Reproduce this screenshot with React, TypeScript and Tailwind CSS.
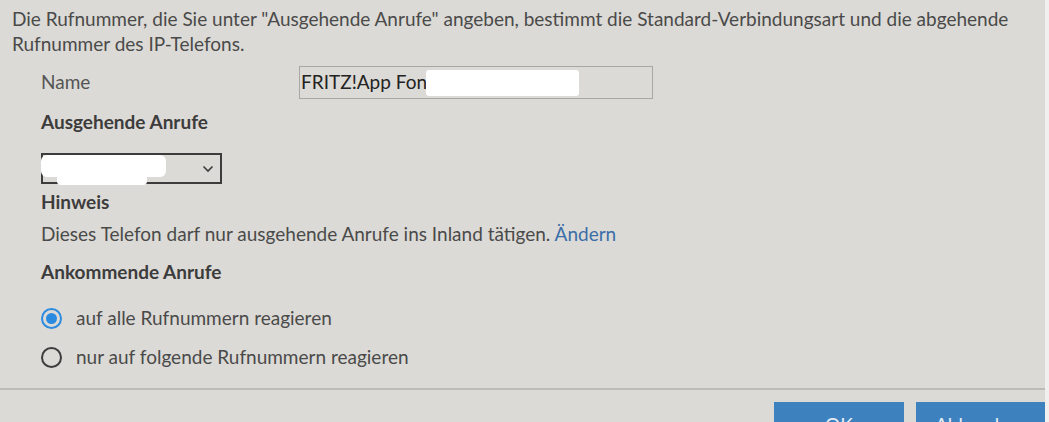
import React from "react";

export default function App() {
  const font = { fontFamily: "Lato, 'Open Sans', sans-serif" };
  return (
    <div className="flex h-[422px] w-[1049px] overflow-hidden bg-[#f1f0ee]" style={font}>
      <div className="flex w-[1045px] shrink-0 flex-col bg-[#dcdad6] text-[19px] text-[#4a4a4a] [&>*]:shrink-0">
        <p className="mt-[6px] pl-[12px] pr-[20px] leading-[25px]">
          Die Rufnummer, die Sie unter "Ausgehende Anrufe" angeben, bestimmt die Standard-Verbindungsart und die abgehende Rufnummer des IP-Telefons.
        </p>

        <div className="mt-[10px] flex h-[33px] items-center pl-[41px]">
          <span className="w-[258px] text-[#555]">Name</span>
          <div className="relative flex h-[33px] w-[354px] items-center border border-[#a9a7a3] pl-[1px] text-[#222]">
            FRITZ!App Fon
            <div className="absolute left-[126px] top-[3px] h-[26px] w-[153px] rounded-[3px] bg-white" />
          </div>
        </div>

        <div className="mt-[11px] pl-[41px] font-bold leading-[24px] text-[#3c3c3c]">Ausgehende Anrufe</div>

        <div className="relative ml-[41px] mt-[19px] flex h-[31px] w-[181px] items-center justify-end border-2 border-[#3c3c3c] pr-[6px]">
          <svg width="12" height="8" viewBox="0 0 12 8" fill="none" stroke="#3c3c3c" strokeWidth="1.6">
            <path d="M1.5 1.5 L6 6 L10.5 1.5" />
          </svg>
          <div className="absolute -left-[2px] top-[0px] h-[22px] w-[125px] rounded-[6px] bg-white" />
          <div className="absolute left-[14px] top-[16px] h-[14px] w-[90px] rounded-[4px] bg-white" />
        </div>

        <div className="mt-[6px] pl-[41px] font-bold leading-[24px] text-[#3c3c3c]">Hinweis</div>
        <div className="mt-[8px] pl-[41px] leading-[24px]">
          Dieses Telefon darf nur ausgehende Anrufe ins Inland tätigen.{" "}
          <span className="text-[#3a6ea8]">Ändern</span>
        </div>

        <div className="mt-[14px] pl-[41px] font-bold leading-[24px] text-[#3c3c3c]">Ankommende Anrufe</div>

        <div className="mt-[22px] flex h-[24px] items-center pl-[41px]">
          <span className="flex h-[21px] w-[21px] items-center justify-center rounded-full border-2 border-[#2a8be0]">
            <span className="h-[11px] w-[11px] rounded-full bg-[#2a8be0]" />
          </span>
          <span className="ml-[14px]">auf alle Rufnummern reagieren</span>
        </div>
        <div className="mt-[15px] flex h-[24px] items-center pl-[41px]">
          <span className="h-[21px] w-[21px] rounded-full border-2 border-[#3c3c3c]" />
          <span className="ml-[14px]">nur auf folgende Rufnummern reagieren</span>
        </div>

        <div className="mt-[19px] h-[2px] w-full bg-[#bdbbb7]" />

        <div className="mt-[12px] flex justify-end gap-[12px]">
          <button className="h-[40px] w-[130px] bg-[#3d82be] pt-[5px] text-[19px] leading-[24px] text-[#e6eef6]">OK</button>
          <button className="h-[40px] w-[129px] bg-[#3d82be] pt-[5px] text-[19px] leading-[24px] text-[#e6eef6]">Abbrechen</button>
        </div>
      </div>
    </div>
  );
}
